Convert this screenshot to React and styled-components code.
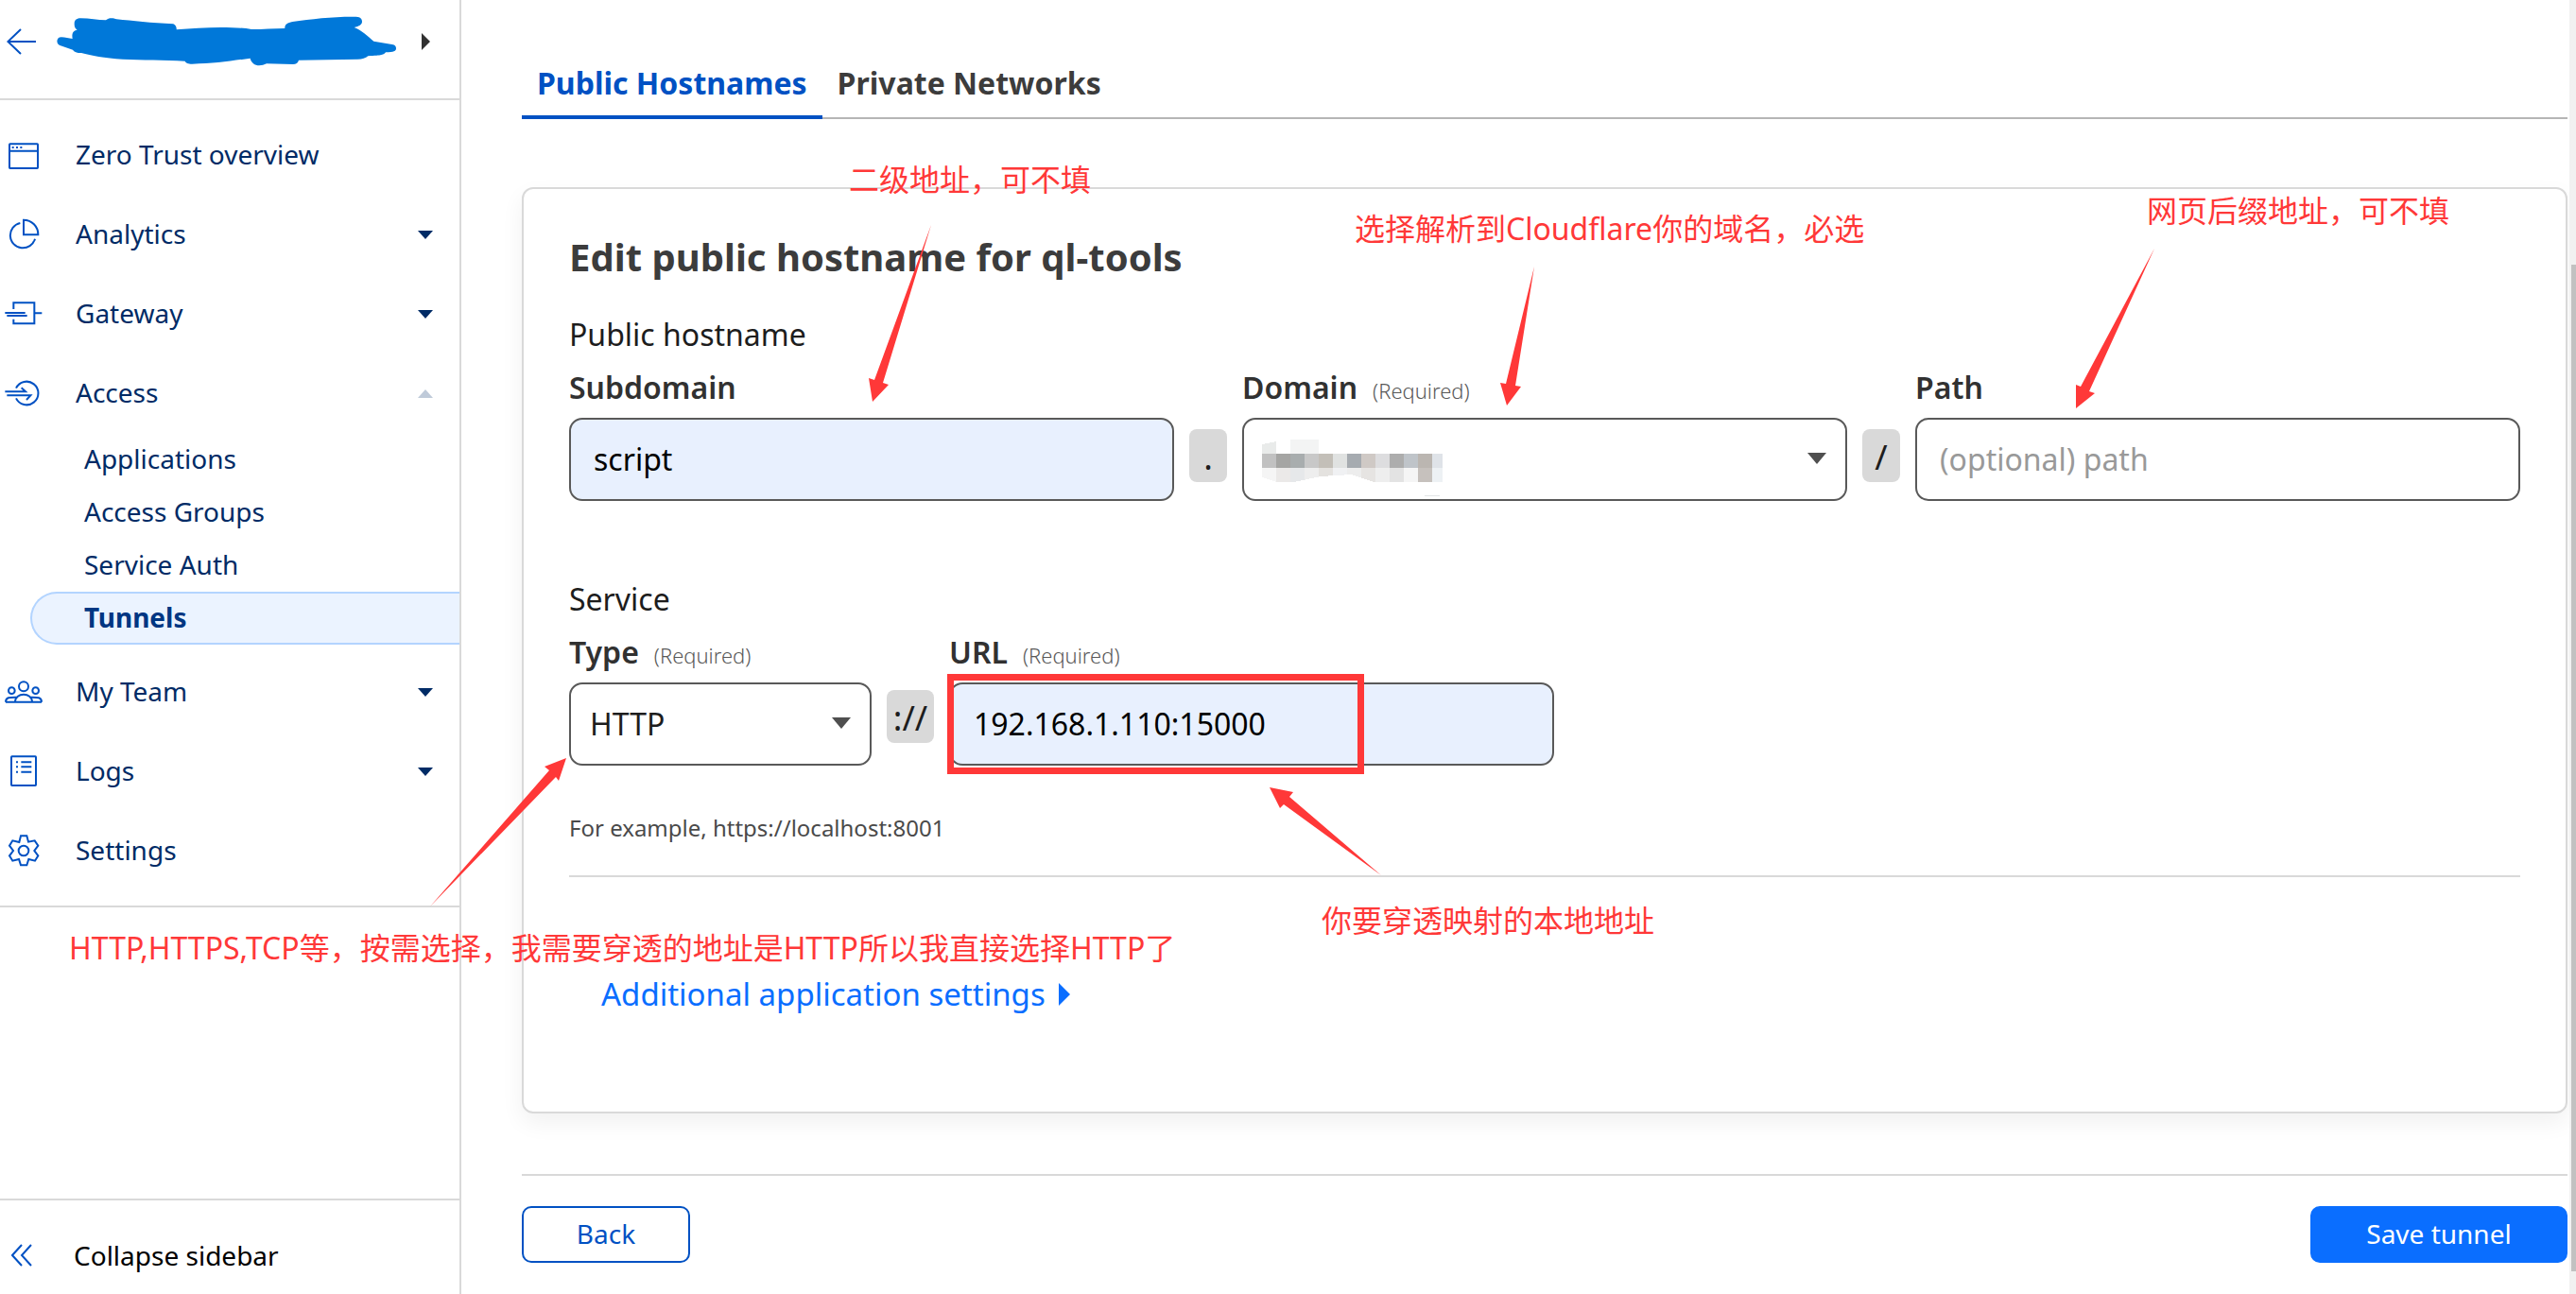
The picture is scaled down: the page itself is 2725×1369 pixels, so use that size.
import React, { useState } from "react";
import styled, { createGlobalStyle } from "styled-components";

const navItems = [
  { label: "Zero Trust overview", icon: "overview" },
  { label: "Analytics", icon: "analytics", caret: "down" },
  { label: "Gateway", icon: "gateway", caret: "down" },
  {
    label: "Access",
    icon: "access",
    caret: "up",
    children: ["Applications", "Access Groups", "Service Auth", "Tunnels"],
  },
  { label: "My Team", icon: "team", caret: "down" },
  { label: "Logs", icon: "logs", caret: "down" },
  { label: "Settings", icon: "settings" },
];

const icons = {
  overview: (
    <>
      <rect x="15" y="25" width="90" height="77" rx="2" />
      <path d="M15 47H105M23 36h6M36 36h6M49 36h6" />
    </>
  ),
  analytics: (
    <>
      <path d="M49 24A40 40 0 1 0 96 74" />
      <path d="M60 61V14A46 46 0 0 1 106 61Z" />
    </>
  ),
  gateway: <path d="M28 45V25H94V91H28V77M94 58H118M1 57H65M7 66H71" />,
  access: (
    <>
      <path d="M36 44A37 37 0 1 1 36 76" />
      <path d="M1 55H66L53 43M7 67H82L69 81" />
    </>
  ),
  team: (
    <>
      <circle cx="60" cy="43" r="15" />
      <circle cx="22" cy="56" r="10" />
      <circle cx="98" cy="56" r="10" />
      <path d="M33 92C33 60 87 60 87 92M3 92H117M3 92C3 76 18 77 36 77M117 92C117 76 102 77 84 77" />
    </>
  ),
  logs: (
    <>
      <rect x="21" y="13" width="78" height="92" rx="2" />
      <path d="M52 31H85M52 46H85M52 62H85M36 31h6M36 46h6M36 62h6" />
    </>
  ),
  settings: (
    <>
      <path d="M51 13H70L75 32L95 28L106 44L94 60L106 76L96 92L76 87L70 106H51L45 87L25 92L15 76L27 60L15 44L25 28L46 33Z" />
      <circle cx="60" cy="60" r="16" />
    </>
  ),
};

const mosaic = [
  ["#c1c1c1", "#a5a5a3", "#a8adae", "#c8c8c8", "#c3bfb8", "#e0e2e1", "#a6abb0", "#cfc9c5", "#dddddf", "#adadad", "#bfc4c9", "#bbb6b1", "#dfe3e8"],
  ["#f5f5f5", "#ebe9e8", "#e6e8ea", "#eeeeee", "#e4e2df", "#f0f1f3", "#ededed", "#e6e4e2", "#eeeeee", "#e3e3e3", "#f5f5f5", "#c6c1bd", "#edf1f4"],
];

const arrows = [
  "985,238 925,402 919,400 923,425 940,407 934,405",
  "1623,282 1593,406 1587,405 1594,429 1609,409 1603,408",
  "2279,263 2201,409 2196,407 2196,432 2216,416 2210,414",
  "1461,926 1364,843 1368,838 1343,833 1354,855 1358,851",
  "455,959 581,815 576,811 599,802 591,826 588,822",
];

const notes = [
  { x: 898, y: 168, text: "二级地址，可不填" },
  { x: 1433, y: 220, text: "选择解析到Cloudflare你的域名，必选" },
  { x: 2271, y: 201, text: "网页后缀地址，可不填" },
  { x: 1398, y: 952, text: "你要穿透映射的本地地址" },
  { x: 73, y: 981, text: "HTTP,HTTPS,TCP等，按需选择，我需要穿透的地址是HTTP所以我直接选择HTTP了" },
];

function Caret({ dir }) {
  const points = { down: "0,0 16,0 8,9", up: "0,9 16,9 8,0" };
  return (
    <CaretSvg $faded={dir === "up"} viewBox="0 0 16 9" aria-hidden="true">
      <polygon points={points[dir]} />
    </CaretSvg>
  );
}

function Sidebar() {
  return (
    <Side>
      <SideHeader>
        <BackLink href="#back" aria-label="Back to accounts">
          <svg width="32" height="28" viewBox="0 0 96 84" fill="none" stroke="#0051c3" strokeWidth="6">
            <path d="M3 42H93M45 3L4 42L45 81" />
          </svg>
        </BackLink>
        <AccountMark viewBox="180 48 1080 168" aria-hidden="true">
          <path d="M236 75C236 62 245 58 256 58C285 58 310 64 336 64C345 55 360 57 370 61C420 66 480 73 550 76C558 80 561 87 560 94C640 86 740 83 798 93C835 93 870 91 904 90C903 78 912 72 928 69C990 60 1060 52 1130 53C1145 54 1149 61 1149 68C1149 78 1140 83 1124 87C1148 96 1165 113 1186 131L1244 141C1254 142 1257 148 1257 154C1257 162 1250 166 1224 166C1218 174 1212 176 1168 178C1160 185 1150 188 1135 188L948 191C945 200 940 204 930 204L846 202C832 209 815 211 804 202C799 197 795 191 794 185C735 193 680 202 610 203C596 203 590 200 587 194C520 190 450 191 390 188C330 185 290 176 258 168C244 168 235 165 231 158L190 144C178 140 177 118 195 118C207 118 218 122 230 123C228 110 229 97 245 95C237 90 236 83 236 75Z" />
        </AccountMark>
        <AccountButton type="button" aria-label="Switch account">
          <svg width="9" height="18" viewBox="0 0 9 18" fill="#313131">
            <polygon points="0,0 9,9 0,18" />
          </svg>
        </AccountButton>
      </SideHeader>
      <Nav>
        {navItems.map((item) => (
          <div key={item.label}>
            <NavLink href="#nav">
              <NavIcon viewBox="0 0 120 120" aria-hidden="true">
                {icons[item.icon]}
              </NavIcon>
              <NavText>{item.label}</NavText>
              {item.caret && <Caret dir={item.caret} />}
            </NavLink>
            {item.children && (
              <SubNav>
                {item.children.map((child) => (
                  <SubLink key={child} href="#sub" $active={child === "Tunnels"}>
                    {child}
                  </SubLink>
                ))}
              </SubNav>
            )}
          </div>
        ))}
      </Nav>
      <Collapse type="button">
        <svg width="22" height="24" viewBox="0 0 22 24" fill="none" stroke="#0051c3" strokeWidth="2">
          <path d="M11 1L1 12L11 23M21 1L11 12L21 23" />
        </svg>
        Collapse sidebar
      </Collapse>
    </Side>
  );
}

function SelectArrow() {
  return (
    <ArrowSvg viewBox="0 0 20 12" aria-hidden="true">
      <polygon points="0,0 20,0 10,12" />
    </ArrowSvg>
  );
}

function Mosaic() {
  return (
    <MosaicSvg viewBox="0 0 196 60" shapeRendering="crispEdges" aria-hidden="true">
      <path d="M0 5L15 2V15H0Z" fill="#e9ebea" />
      <rect x="30" width="30" height="15" fill="#f3f4f4" />
      {mosaic.map((row, r) =>
        row.map((color, c) => (
          <rect key={`${r}-${c}`} x={c * 15} y={15 + r * 15} width={c === 12 ? 11 : 15} height="15" fill={color} />
        ))
      )}
      <path d="M0 40L16 45H0ZM34 45L62 39L95 37L118 45Z" fill="#fff" />
      <rect x="172" y="59" width="16" height="1" fill="#e3e5e6" />
    </MosaicSvg>
  );
}

export default function App() {
  const [subdomain, setSubdomain] = useState("script");
  const [url, setUrl] = useState("192.168.1.110:15000");

  return (
    <Page>
      <GlobalStyle />
      <Sidebar />
      <Main>
        <Tabs role="tablist">
          <Tab type="button" role="tab" aria-selected="true" $active>
            Public Hostnames
          </Tab>
          <Tab type="button" role="tab" aria-selected="false">
            Private Networks
          </Tab>
        </Tabs>

        <Card>
          <Title>Edit public hostname for ql-tools</Title>
          <Group>Public hostname</Group>
          <HostRow>
            <Field>
              <Label htmlFor="subdomain">Subdomain</Label>
              <Input
                id="subdomain"
                $filled
                value={subdomain}
                onChange={(e) => setSubdomain(e.target.value)}
              />
            </Field>
            <Separator>.</Separator>
            <Field>
              <Label htmlFor="domain">
                Domain <Required>(Required)</Required>
              </Label>
              <SelectBox>
                <Select id="domain">
                  <option value=""></option>
                </Select>
                <Mosaic />
                <SelectArrow />
              </SelectBox>
            </Field>
            <Separator>/</Separator>
            <Field>
              <Label htmlFor="path">Path</Label>
              <Input id="path" placeholder="(optional) path" />
            </Field>
          </HostRow>

          <ServiceGroup>Service</ServiceGroup>
          <ServiceRow>
            <Field>
              <Label htmlFor="type">
                Type <Required>(Required)</Required>
              </Label>
              <SelectBox>
                <Select id="type" defaultValue="HTTP">
                  <option>HTTP</option>
                  <option>HTTPS</option>
                  <option>TCP</option>
                </Select>
                <SelectArrow />
              </SelectBox>
            </Field>
            <Separator $raised>://</Separator>
            <Field>
              <Label htmlFor="url">
                URL <Required>(Required)</Required>
              </Label>
              <Input id="url" $filled value={url} onChange={(e) => setUrl(e.target.value)} />
            </Field>
          </ServiceRow>
          <Help>For example, https://localhost:8001</Help>
          <Divider />
          <MoreLink href="#settings">
            Additional application settings
            <svg width="12" height="24" viewBox="0 0 12 24" fill="#0a6eff">
              <polygon points="0,0 12,12 0,24" />
            </svg>
          </MoreLink>
        </Card>

        <Footer>
          <Button type="button">Back</Button>
          <Button type="button" $primary>
            Save tunnel
          </Button>
        </Footer>
      </Main>
      <ScrollTrack>
        <ScrollThumb />
      </ScrollTrack>

      <Annotations>
        <Arrows width="2725" height="1369" aria-hidden="true">
          {arrows.map((points) => (
            <polygon key={points} points={points} />
          ))}
        </Arrows>
        <Highlight />
        {notes.map((note) => (
          <Note key={note.text} $x={note.x} $y={note.y}>
            {note.text}
          </Note>
        ))}
      </Annotations>
    </Page>
  );
}

const GlobalStyle = createGlobalStyle`
  * {
    box-sizing: border-box;
  }
  body {
    margin: 0;
    background: #fff;
    color: #1d1d1d;
    font-family: "Noto Sans", "Open Sans", "Noto Sans CJK SC", sans-serif;
    font-size: 28px;
    overflow: hidden;
  }
  button, input, select {
    font: inherit;
  }
  a {
    text-decoration: none;
  }
`;

const Page = styled.div`
  position: relative;
  display: flex;
  height: 100vh;
  overflow: hidden;
`;

const Side = styled.aside`
  display: flex;
  flex-direction: column;
  flex: 0 0 488px;
  border-right: 2px solid #d9d9d9;
`;

const SideHeader = styled.div`
  display: flex;
  align-items: center;
  padding: 16px 31px 32px 7px;
  border-bottom: 2px solid #d9d9d9;
`;

const BackLink = styled.a`
  display: flex;
  margin-right: 21px;
`;

const AccountMark = styled.svg`
  width: 360px;
  height: 56px;
  fill: #0078d9;
`;

const AccountButton = styled.button`
  display: flex;
  margin-left: auto;
  padding: 0;
  border: none;
  background: none;
`;

const Nav = styled.nav`
  padding: 16px 0;
  border-bottom: 2px solid #d9d9d9;
`;

const NavLink = styled.a`
  display: flex;
  align-items: center;
  height: 84px;
  padding: 0 28px 0 5px;
  color: #002b66;
`;

const NavIcon = styled.svg`
  width: 40px;
  height: 40px;
  margin-right: 35px;
  fill: none;
  stroke: #0051c3;
  stroke-width: 6;
`;

const NavText = styled.span`
  flex: 1;
  padding-bottom: 2px;
`;

const CaretSvg = styled.svg`
  width: 16px;
  height: 9px;
  fill: ${(p) => (p.$faded ? "#bfcad9" : "#002b66")};
`;

const SubNav = styled.div`
  padding: 0 0 8px 32px;
`;

const SubLink = styled.a`
  display: block;
  height: 56px;
  padding-left: 55px;
  border: 2px solid ${(p) => (p.$active ? "#b3d4ff" : "transparent")};
  border-right: none;
  border-radius: 28px 0 0 28px;
  background: ${(p) => (p.$active ? "#ebf3ff" : "none")};
  color: ${(p) => (p.$active ? "#003682" : "#002b66")};
  font-weight: ${(p) => (p.$active ? 700 : 400)};
  line-height: 50px;
`;

const Collapse = styled.button`
  display: flex;
  align-items: center;
  gap: 44px;
  height: 101px;
  margin-top: auto;
  padding: 16px 12px 0;
  border: none;
  border-top: 2px solid #d9d9d9;
  background: none;
  color: #000;
`;

const Main = styled.main`
  flex: 1;
  min-width: 0;
  padding: 50px 2px 0 64px;
`;

const Tabs = styled.div`
  display: flex;
  border-bottom: 2px solid #b6b6b6;
`;

const Tab = styled.button`
  margin-bottom: -2px;
  padding: 4px 16px 0;
  border: none;
  border-bottom: 4px solid ${(p) => (p.$active ? "#0051c3" : "transparent")};
  background: none;
  color: ${(p) => (p.$active ? "#0051c3" : "#3c3c3c")};
  font-size: 32px;
  font-weight: 700;
  line-height: 68px;
`;

const Card = styled.section`
  margin-top: 72px;
  padding: 48px 48px 104px;
  border: 2px solid #d9d9d9;
  border-radius: 12px;
  box-shadow: 0 10px 24px rgba(0, 20, 20, 0.06);
`;

const Title = styled.h2`
  margin: 0;
  color: #3c3c3c;
  font-size: 40px;
  font-weight: 700;
  line-height: 48px;
`;

const Group = styled.div`
  margin: 38px 0 16px;
  font-size: 32px;
  line-height: 40px;
`;

const ServiceGroup = styled(Group)`
  margin-top: 84px;
`;

const HostRow = styled.div`
  display: grid;
  grid-template-columns: 1fr 40px 1fr 40px 1fr;
  gap: 16px;
`;

const ServiceRow = styled.div`
  display: grid;
  grid-template-columns: minmax(0, 320px) 50px minmax(0, 640px);
  gap: 16px;
`;

const Field = styled.div`
  min-width: 0;
`;

const Label = styled.label`
  display: flex;
  align-items: baseline;
  gap: 16px;
  height: 40px;
  margin-bottom: 12px;
  color: #313131;
  font-size: 32px;
  font-weight: 600;
  line-height: 40px;
`;

const Required = styled.span`
  color: #595959;
  font-size: 22px;
  font-weight: 300;
`;

const Input = styled.input`
  display: block;
  width: 100%;
  height: 88px;
  padding: 0 24px 2px;
  border: 2px solid #595959;
  border-radius: 14px;
  outline: none;
  background: ${(p) => (p.$filled ? "#e8f0fe" : "#fff")};
  color: #000;
  font-size: 32px;

  &::placeholder {
    color: #999;
  }
`;

const SelectBox = styled.div`
  position: relative;
`;

const Select = styled.select`
  display: block;
  width: 100%;
  height: 88px;
  padding: 0 20px 2px;
  border: 2px solid #595959;
  border-radius: 14px;
  appearance: none;
  background: #fff;
  color: #1d1d1d;
  font-size: 32px;
`;

const ArrowSvg = styled.svg`
  position: absolute;
  top: 37px;
  right: 22px;
  width: 20px;
  height: 12px;
  fill: #4f4f4f;
  pointer-events: none;
`;

const MosaicSvg = styled.svg`
  position: absolute;
  top: 23px;
  left: 21px;
  width: 196px;
  height: 60px;
  pointer-events: none;
`;

const Separator = styled.span`
  height: 56px;
  margin-top: ${(p) => (p.$raised ? 60 : 64)}px;
  border-radius: 8px;
  background: #d9d9d9;
  font-size: 36px;
  line-height: 60px;
  text-align: center;
`;

const Help = styled.p`
  margin: 50px 0 34px;
  color: #4a4a4a;
  font-size: 24px;
  line-height: 32px;
`;

const Divider = styled.hr`
  margin: 0 0 104px;
  border: none;
  border-top: 2px solid #d9d9d9;
`;

const MoreLink = styled.a`
  display: flex;
  align-items: center;
  gap: 14px;
  padding-left: 34px;
  color: #0a6eff;
  font-size: 33px;
  line-height: 40px;
`;

const Footer = styled.footer`
  display: flex;
  justify-content: space-between;
  margin-top: 64px;
  padding-top: 32px;
  border-top: 2px solid #d9d9d9;
`;

const Button = styled.button`
  width: ${(p) => (p.$primary ? 272 : 178)}px;
  height: 60px;
  padding: 0 0 2px;
  border: 2px solid ${(p) => (p.$primary ? "#0a6eff" : "#0051c3")};
  border-radius: 10px;
  background: ${(p) => (p.$primary ? "#0a6eff" : "#fff")};
  color: ${(p) => (p.$primary ? "#fff" : "#0051c3")};
  line-height: 54px;
`;

const ScrollTrack = styled.div`
  flex: 0 0 7px;
  padding: 280px 0 24px 2px;
  background: #f1f1f1;
`;

const ScrollThumb = styled.div`
  height: 100%;
  background: #c1c1c1;
`;

const Annotations = styled.div`
  position: absolute;
  inset: 0;
  pointer-events: none;
`;

const Arrows = styled.svg`
  position: absolute;
  top: 0;
  left: 0;
  fill: #ff3838;
`;

const Highlight = styled.div`
  position: absolute;
  top: 713px;
  left: 1002px;
  width: 441px;
  height: 106px;
  border: 7px solid #ff3838;
`;

const Note = styled.span`
  position: absolute;
  top: ${(p) => p.$y}px;
  left: ${(p) => p.$x}px;
  color: #ff3838;
  font-size: 32px;
  line-height: 44px;
  white-space: nowrap;
`;
